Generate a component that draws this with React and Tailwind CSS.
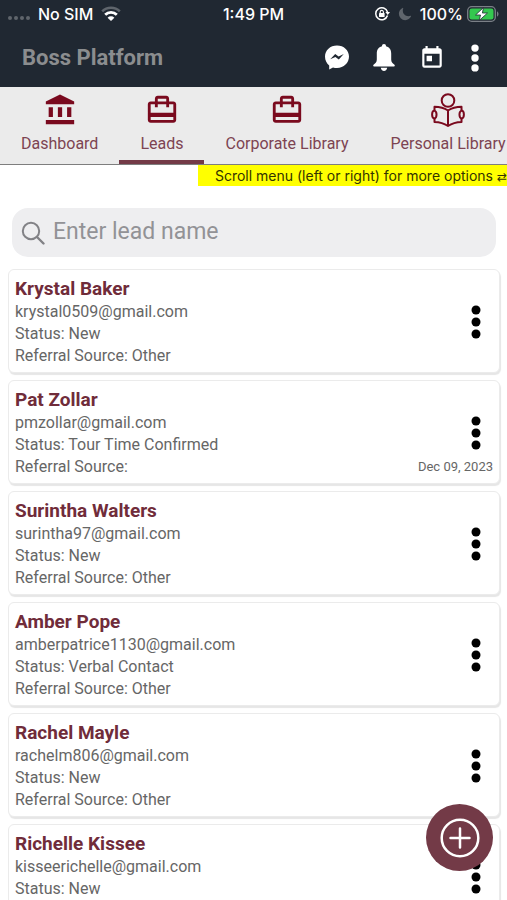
import { useState } from "react";
import { MdAccountBalance, MdCardTravel, MdToday } from "react-icons/md";
import { IoMoon } from "react-icons/io5";

const leads = [
  { id: 1, name: "Krystal Baker", email: "krystal0509@gmail.com", status: "New", source: "Other" },
  { id: 2, name: "Pat Zollar", email: "pmzollar@gmail.com", status: "Tour Time Confirmed", source: "", date: "Dec 09, 2023" },
  { id: 3, name: "Surintha Walters", email: "surintha97@gmail.com", status: "New", source: "Other" },
  { id: 4, name: "Amber Pope", email: "amberpatrice1130@gmail.com", status: "Verbal Contact", source: "Other" },
  { id: 5, name: "Rachel Mayle", email: "rachelm806@gmail.com", status: "New", source: "Other" },
  { id: 6, name: "Richelle Kissee", email: "kisseerichelle@gmail.com", status: "New", source: "Other" },
];

function ReaderIcon() {
  return (
    <svg width="34" height="34" viewBox="0 0 34 34" fill="none" stroke="currentColor" strokeWidth="2" strokeLinejoin="round">
      <circle cx="17" cy="7.5" r="6.3" />
      <path d="M17 17.5 C13 15 9 14 3.5 13.8 V17.6 M3.5 25.5 V29 C9 29.2 13 30.4 17 33 C21 30.4 25 29.2 30.5 29 V25.5 M30.5 17.6 V13.8 C25 14 21 15 17 17.5 V33" />
      <path d="M3.5 17.6 C0.3 18 0.3 25 3.5 25.5 C6.2 24.5 6.2 18.5 3.5 17.6 Z" />
      <path d="M30.5 17.6 C33.7 18 33.7 25 30.5 25.5 C27.8 24.5 27.8 18.5 30.5 17.6 Z" />
    </svg>
  );
}

function WifiIcon() {
  return (
    <svg width="20" height="16" viewBox="0 0 20 16" fill="none">
      <path d="M1.2 5.4 A12.5 12.5 0 0 1 18.8 5.4" stroke="#5f656c" strokeWidth="2.6" />
      <path d="M4.2 8.8 A8.2 8.2 0 0 1 15.8 8.8" stroke="#fff" strokeWidth="2.8" />
      <path d="M10 15 L6.6 11.7 A4.8 4.8 0 0 1 13.4 11.7 Z" fill="#fff" />
    </svg>
  );
}

function RotationLockIcon() {
  return (
    <svg width="16" height="16" viewBox="0 0 16 16" fill="none">
      <path d="M13.5 9.5 A6 6 0 1 1 13.5 6" stroke="#fff" strokeWidth="1.5" />
      <path d="M11.4 6 H16 L13.7 9 Z" fill="#fff" />
      <rect x="5" y="7" width="5.6" height="4" rx="0.6" fill="#fff" />
      <path d="M6.2 7.2 V6 A1.6 1.6 0 0 1 9.4 6 V7.2" stroke="#fff" strokeWidth="1.1" />
    </svg>
  );
}

function BatteryIcon() {
  return (
    <svg width="32" height="16" viewBox="0 0 32 16" fill="none">
      <rect x="0.7" y="0.7" width="27.6" height="14.6" rx="4" stroke="#7b8087" strokeWidth="1.3" />
      <rect x="2.5" y="2.5" width="24" height="11" rx="2.3" fill="#34c84f" />
      <path d="M30 5.5 C32 6 32 10 30 10.5 Z" fill="#7b8087" />
      <path d="M16.5 1.5 L8.5 9 H13.5 L12.2 14.5 L20.5 7 H15.4 Z" fill="#fff" stroke="#202832" strokeWidth="0.8" />
    </svg>
  );
}

function MessengerIcon() {
  return (
    <svg width="24" height="25" viewBox="0 0 24 25">
      <path d="M12 0.5 C5.2 0.5 0 5.3 0 11.5 C0 15.2 1.6 18.3 4.2 20.4 V24.6 L8 22.4 C9.3 22.8 10.6 23 12 23 C18.8 23 24 17.8 24 11.5 C24 5.3 18.8 0.5 12 0.5 Z" fill="#fff" />
      <path d="M5.2 14.2 L10.2 8.9 L13.6 11.4 L18.8 9 L13.8 14.4 L10.4 11.9 Z" fill="#202832" />
    </svg>
  );
}

function BellIcon() {
  return (
    <svg width="22" height="27" viewBox="0 0 22 27" fill="#fff">
      <path d="M11 0 C9.7 0 9 0.9 9 2.3 C5.3 3.2 3.8 6 3.8 9.5 V15.5 C3.8 18 2.5 19 0.8 20.6 C-0.3 21.7 0.2 22.5 1.5 22.5 H20.5 C21.8 22.5 22.3 21.7 21.2 20.6 C19.5 19 18.2 18 18.2 15.5 V9.5 C18.2 6 16.7 3.2 13 2.3 C13 0.9 12.3 0 11 0 Z" />
      <path d="M7.8 23.8 H14.2 C14 25.8 12.7 26.9 11 26.9 C9.3 26.9 8 25.8 7.8 23.8 Z" />
    </svg>
  );
}

function SearchIcon() {
  return (
    <svg width="24" height="24" viewBox="0 0 24 24" fill="none" stroke="#828286" strokeWidth="2" strokeLinecap="round" className="shrink-0">
      <circle cx="10" cy="10" r="8.2" />
      <path d="M16 16 L22.5 22.5" strokeWidth="2.4" />
    </svg>
  );
}

function DotsIcon({ className }) {
  return (
    <svg viewBox="0 0 10 34" fill="currentColor" className={className}>
      <circle cx="5" cy="5" r="4.5" />
      <circle cx="5" cy="17" r="4.5" />
      <circle cx="5" cy="29" r="4.5" />
    </svg>
  );
}

const tabs = [
  { label: "Dashboard", icon: <MdAccountBalance size={34} /> },
  { label: "Leads", icon: <MdCardTravel size={34} /> },
  { label: "Corporate Library", icon: <MdCardTravel size={34} /> },
  { label: "Personal Library", icon: <ReaderIcon /> },
];

function StatusBar() {
  return (
    <div className="grid h-7 grid-cols-3 items-center px-2 font-['Inter',sans-serif] text-base font-medium text-white">
      <div className="flex items-center gap-2">
        <div className="flex gap-[2px] pt-2">
          <span className="size-1 rounded-full bg-[#5f656c]" />
          <span className="size-1 rounded-full bg-[#5f656c]" />
          <span className="size-1 rounded-full bg-[#5f656c]" />
          <span className="size-1 rounded-full bg-[#5f656c]" />
        </div>
        <span>No SIM</span>
        <WifiIcon />
      </div>
      <div className="text-center">1:49 PM</div>
      <div className="flex items-center justify-end gap-1">
        <RotationLockIcon />
        <IoMoon size={14} className="mx-1 text-[#5f656c]" />
        <span>100%</span>
        <BatteryIcon />
      </div>
    </div>
  );
}

function LeadCard({ lead }) {
  return (
    <li className="flex h-[104px] shrink-0 justify-between rounded-md border border-[#ebebeb] bg-white px-[6px] pt-[7px] shadow-[1px_2px_1px_#e6e6e6]">
      <div className="text-base leading-[22px] text-[#666]">
        <h2 className="text-[19px] leading-6 font-bold text-[#702c3a]">{lead.name}</h2>
        <p>{lead.email}</p>
        <p>Status: {lead.status}</p>
        <p>Referral Source: {lead.source}</p>
      </div>
      <div className="flex flex-col items-end justify-between pb-[6px]">
        <button aria-label={`Options for ${lead.name}`} className="mt-7 mr-3 text-black">
          <DotsIcon className="h-[34px] w-[10px]" />
        </button>
        {lead.date && <time className="text-[13px] leading-5 text-[#666]">{lead.date}</time>}
      </div>
    </li>
  );
}

function App() {
  const [activeTab, setActiveTab] = useState("Leads");
  const [search, setSearch] = useState("");

  const visibleLeads = leads.filter((lead) =>
    lead.name.toLowerCase().includes(search.toLowerCase())
  );

  return (
    <div className="flex h-screen flex-col overflow-hidden bg-white font-['Roboto',sans-serif]">
      <header className="shrink-0 bg-[#202832]">
        <StatusBar />
        <div className="flex h-[59px] items-center justify-between pr-[26px] pl-[22px]">
          <h1 className="text-[22px] font-bold text-[#8b8d8f]">Boss Platform</h1>
          <div className="flex items-center gap-6 text-white">
            <button aria-label="Messages"><MessengerIcon /></button>
            <button aria-label="Notifications"><BellIcon /></button>
            <button aria-label="Calendar"><MdToday size={26} /></button>
            <button aria-label="More"><DotsIcon className="h-7 w-3" /></button>
          </div>
        </div>
      </header>

      <nav className="flex shrink-0 overflow-hidden border-b border-[#7e7e7e] bg-[#ebebeb]">
        {tabs.map(({ label, icon }) => (
          <button
            key={label}
            onClick={() => setActiveTab(label)}
            className={`flex h-[77px] shrink-0 flex-col items-center gap-1 border-b-4 px-[21px] pt-[5px] ${
              activeTab === label ? "border-[#733a47]" : "border-transparent"
            }`}
          >
            <span className="flex h-9 items-center text-[#7a0a1e]">{icon}</span>
            <span className="text-base leading-6 whitespace-nowrap text-[#7d4452]">{label}</span>
          </button>
        ))}
      </nav>

      <p className="shrink-0 self-end bg-[#ffff00] pl-[17px] font-['Inter','DejaVu_Sans',sans-serif] text-sm leading-[21px] whitespace-nowrap text-[#333300]">
        Scroll menu (left or right) for more options <span className="text-xs">⇄</span>
      </p>

      <label className="mt-[22px] mr-[11px] ml-3 flex h-[49px] shrink-0 items-center gap-2 rounded-2xl bg-[#eeeef0] px-[9px]">
        <SearchIcon />
        <input
          type="text"
          aria-label="Lead name"
          placeholder="Enter lead name"
          value={search}
          onChange={(e) => setSearch(e.target.value)}
          className="min-w-0 flex-1 bg-transparent text-[23px] text-[#333] outline-none placeholder:text-[#929296]"
        />
      </label>

      <ul className="mt-3 flex min-h-0 flex-1 flex-col gap-[7px] overflow-hidden pr-[7px] pl-2">
        {visibleLeads.map((lead) => (
          <LeadCard key={lead.id} lead={lead} />
        ))}
      </ul>

      <button
        aria-label="Add lead"
        className="fixed right-[14px] bottom-[29px] flex size-[67px] items-center justify-center rounded-full bg-[#733a47]"
      >
        <svg width="40" height="40" viewBox="0 0 40 40" fill="none" stroke="#fff" strokeWidth="2.5" strokeLinecap="round">
          <circle cx="20" cy="20" r="18.3" />
          <path d="M20 10.5 V29.5 M10.5 20 H29.5" />
        </svg>
      </button>
    </div>
  );
}

export default App;
